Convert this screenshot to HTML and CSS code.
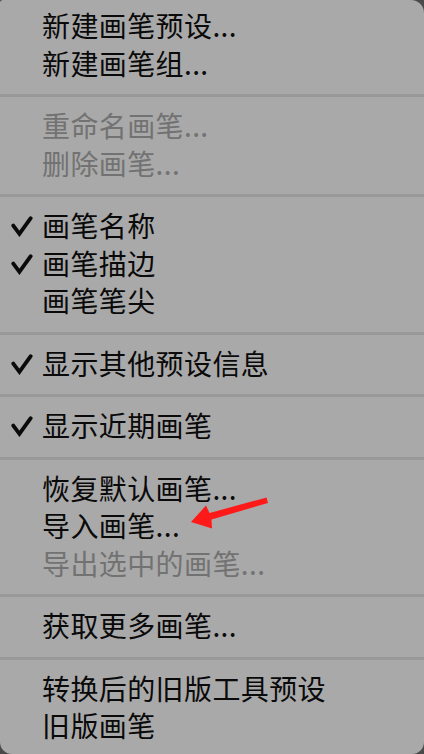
FILE: index.html
```html
<!DOCTYPE html>
<html lang="zh-CN">
<head>
<meta charset="utf-8">
<title>画笔菜单</title>
<link rel="stylesheet" href="styles.css">
</head>
<body>
<div class="menu">
  <div class="group">
    <div class="item"><span class="label">新建画笔预设...</span></div>
    <div class="item"><span class="label">新建画笔组...</span></div>
  </div>
  <div class="sep"></div>
  <div class="group">
    <div class="item disabled"><span class="label">重命名画笔...</span></div>
    <div class="item disabled"><span class="label">删除画笔...</span></div>
  </div>
  <div class="sep"></div>
  <div class="group">
    <div class="item checked"><svg class="check" viewBox="0 0 24 24"><path d="M2.5 11.5 L9.2 20.5 L21.5 3.5"/></svg><span class="label">画笔名称</span></div>
    <div class="item checked"><svg class="check" viewBox="0 0 24 24"><path d="M2.5 11.5 L9.2 20.5 L21.5 3.5"/></svg><span class="label">画笔描边</span></div>
    <div class="item"><span class="label">画笔笔尖</span></div>
  </div>
  <div class="sep"></div>
  <div class="group">
    <div class="item checked"><svg class="check" viewBox="0 0 24 24"><path d="M2.5 11.5 L9.2 20.5 L21.5 3.5"/></svg><span class="label">显示其他预设信息</span></div>
  </div>
  <div class="sep"></div>
  <div class="group">
    <div class="item checked"><svg class="check" viewBox="0 0 24 24"><path d="M2.5 11.5 L9.2 20.5 L21.5 3.5"/></svg><span class="label">显示近期画笔</span></div>
  </div>
  <div class="sep"></div>
  <div class="group">
    <div class="item"><span class="label">恢复默认画笔...</span></div>
    <div class="item"><span class="label">导入画笔...</span></div>
    <div class="item disabled"><span class="label">导出选中的画笔...</span></div>
  </div>
  <div class="sep"></div>
  <div class="group">
    <div class="item"><span class="label">获取更多画笔...</span></div>
  </div>
  <div class="sep"></div>
  <div class="group">
    <div class="item"><span class="label">转换后的旧版工具预设</span></div>
    <div class="item"><span class="label">旧版画笔</span></div>
  </div>
  <svg class="arrow" viewBox="0 0 424 754" aria-hidden="true">
    <polygon points="191,522 212,528.5 211.5,519.5 268,503 266.5,497.5 209.5,513 206,505.5" />
  </svg>
</div>
</body>
</html>
```
FILE: styles.css
```css
html, body {
  margin: 0;
  padding: 0;
  background: #4a4a4a;
}
body {
  width: 424px;
  height: 754px;
  overflow: hidden;
}
.menu {
  position: relative;
  box-sizing: border-box;
  width: 424px;
  height: 754px;
  padding-top: 7.25px;
  background: #a9a9a9;
  border-radius: 3px 13px 12px 12px;
  font-family: "Noto Sans CJK SC", "Liberation Sans", sans-serif;
  font-size: 28px;
  color: #0a0a0a;
}
.group {
  display: flex;
  flex-direction: column;
}
.item {
  position: relative;
  height: 37.5px;
  display: flex;
  align-items: center;
  padding-left: 42px;
  white-space: nowrap;
}
.label {
  line-height: 37.5px;
  letter-spacing: 0.4px;
}
.item.disabled {
  color: #727272;
}
.check {
  position: absolute;
  left: 11px;
  top: 8px;
  width: 22px;
  height: 22px;
  fill: none;
  stroke: #0a0a0a;
  stroke-width: 4.2;
  stroke-linecap: round;
  stroke-linejoin: miter;
}
.sep {
  height: 3px;
  margin: 12px 0 10px;
  background: #999999;
}
.arrow {
  position: absolute;
  left: 0;
  top: 0;
  width: 424px;
  height: 754px;
  pointer-events: none;
}
.arrow polygon {
  fill: #ff1a1a;
}
```
